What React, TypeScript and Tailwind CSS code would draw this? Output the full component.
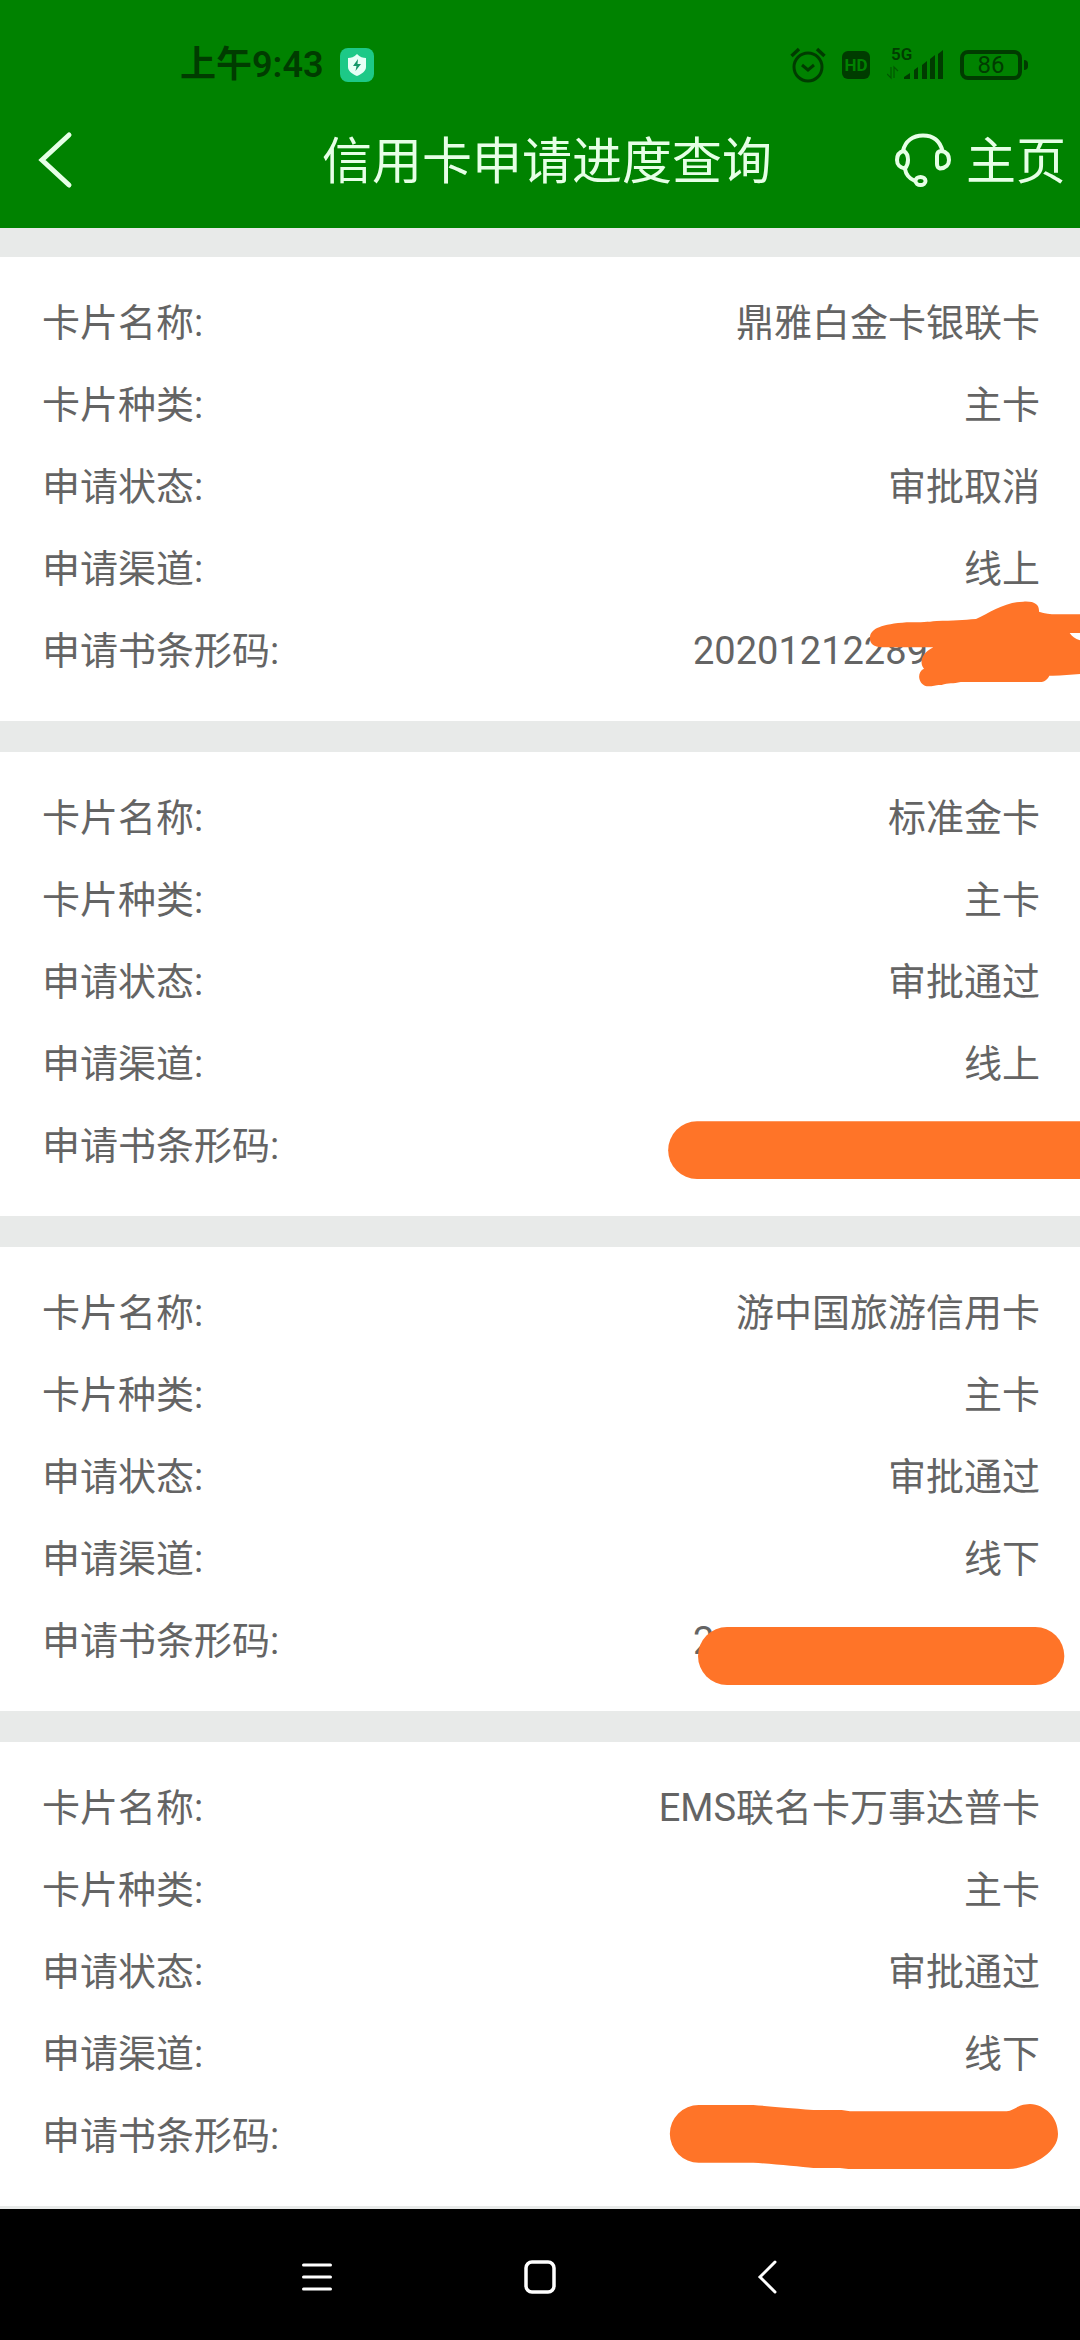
import React from 'react';

interface Application {
  name: string;
  kind: string;
  status: string;
  channel: string;
  barcode: string;
  mask: React.ReactNode;
}

// Marker strokes that hide the barcode, drawn on a 3x grid
const applications: Application[] = [
  {
    name: '鼎雅白金卡银联卡',
    kind: '主卡',
    status: '审批取消',
    channel: '线上',
    barcode: '20201212289',
    mask: (
      <svg className="absolute right-0 bottom-0 w-[440px] h-[141px]" viewBox="0 0 1320 423" fill="#ff7428" aria-hidden="true">
        <path d="M690 172C692 145 725 133 800 127C850 127 860 126 890 123C940 122 970 120 1008 117C1050 98 1095 66 1150 65C1185 63 1198 74 1197 95C1215 101 1230 103 1250 103H1320V159H1289C1295 168 1305 176 1320 181V282C1290 284 1260 288 1228 287C1222 299 1212 306 1200 306H962C940 312 925 308 905 315C885 314 880 320 860 319C833 312 830 275 852 266C839 252 840 222 880 202H725C700 201 688 190 690 172Z" />
      </svg>
    ),
  },
  {
    name: '标准金卡',
    kind: '主卡',
    status: '审批通过',
    channel: '线上',
    barcode: '',
    mask: (
      <svg className="absolute right-0 bottom-0 w-[440px] h-[126px]" viewBox="0 0 1320 378" fill="#ff7428" aria-hidden="true">
        <path d="M171 94H1320V267H171A86 86 0 0 1 171 94Z" />
      </svg>
    ),
  },
  {
    name: '游中国旅游信用卡',
    kind: '主卡',
    status: '审批通过',
    channel: '线下',
    barcode: '2',
    mask: (
      <svg className="absolute right-0 bottom-0 w-[440px] h-[111px]" viewBox="0 0 1320 333" fill="#ff7428" aria-hidden="true">
        <rect x="174" y="81" width="1099" height="174" rx="87" />
      </svg>
    ),
  },
  {
    name: 'EMS联名卡万事达普卡',
    kind: '主卡',
    status: '审批通过',
    channel: '线下',
    barcode: '',
    mask: (
      <svg className="absolute right-0 bottom-0 w-[440px] h-[126px]" viewBox="0 0 1320 378" fill="#ff7428" aria-hidden="true">
        <path d="M176 75H340C380 78 440 84 520 90H605L630 94H1100C1125 92 1130 73 1170 72C1215 74 1254 112 1254 162C1254 222 1165 266 1105 267H625L600 264H520C480 260 400 252 340 248H176A86 86 0 0 1 176 75Z" />
      </svg>
    ),
  },
];

const StatusBar: React.FC = () => (
  <div className="h-[92px] pt-[38px] pl-[180px] pr-[52px] flex items-center justify-between text-[#003c00]">
    <div className="flex items-center gap-4">
      <span className="text-[36px] leading-10 font-semibold">上午9:43</span>
      <svg className="w-[34px] h-[34px]" viewBox="0 0 34 34" aria-hidden="true">
        <rect width="34" height="34" rx="8" fill="#1dc987" />
        <path d="M17 6C20 9 23 10 26 10V19C26 23 22 26 17 28C12 26 8 23 8 19V10C11 10 14 9 17 6Z" fill="#e6fff6" />
        <path d="M18 11L13 18H16.500L15.500 23L21 16H17.500Z" fill="#15976a" />
      </svg>
    </div>
    <div className="flex items-center">
      <svg className="w-9 h-9 mr-4" viewBox="0 0 36 36" fill="none" stroke="currentColor" strokeWidth="3" aria-hidden="true">
        <circle cx="18" cy="20" r="14" />
        <path d="M12 18L18 23L24 18" />
        <path d="M1.500 9L9 2M34.500 9L27 2" strokeWidth="3.500" />
      </svg>
      <span className="w-7 h-7 mr-[17px] rounded-md bg-[#003c00] text-[#008200] text-[17px] leading-7 font-bold text-center">HD</span>
      <div className="relative w-[57px] h-[34px] mr-4">
        <span className="absolute left-[4px] top-[-2px] text-[17px] leading-4 font-semibold">5G</span>
        <svg className="w-full h-full" viewBox="0 0 57 34" fill="currentColor" aria-hidden="true">
          <path d="M4 19V30L0 26M7 30V19L11 23" fill="none" stroke="currentColor" strokeWidth="1.200" opacity="0.6" />
          <path d="M17 31V29L23 25V31ZM27 31V22L31 19V31ZM35 31V17L40 13V31ZM43 31V11L48 7V31ZM51 31V6L56 2V31Z" />
        </svg>
      </div>
      <span className="w-[62px] h-[30px] rounded-lg border-4 border-[#003c00] text-2xl leading-[22px] text-center">86</span>
      <span className="w-1 h-2.5 ml-0.5 rounded-r-full bg-[#003c00]" />
    </div>
  </div>
);

const TitleBar: React.FC = () => (
  <div className="h-[136px] pl-7 pr-[14px] grid grid-cols-[1fr_auto_1fr] items-center text-[#e6ffe6]">
    <button type="button" aria-label="返回" className="justify-self-start w-12 h-16">
      <svg viewBox="0 0 48 64" fill="none" stroke="currentColor" strokeWidth="5" strokeLinecap="round" aria-hidden="true">
        <path d="M41 7L14 32L41 57" />
      </svg>
    </button>
    <h1 className="pt-1 text-[50px] leading-[64px]">信用卡申请进度查询</h1>
    <div className="justify-self-end flex items-center gap-[15px]">
      <button type="button" aria-label="客服">
        <svg className="w-14 h-[54px]" viewBox="0 0 56 54" fill="none" stroke="currentColor" strokeWidth="4" strokeLinejoin="round" aria-hidden="true">
          <path d="M8 18C10 8 18 2.500 28 2.500S45 8 47.500 18" />
          <path d="M9 18C4 19 2 22.500 2 27S5 35 10 35.500C12 33 13 31 13 27S12 20 9 18Z" />
          <path d="M46.500 18C52 19 54 22.500 54 27S51 35 45 35.500C43 35 42 34 42 31V23C42 20 43 18 46.500 18Z" />
          <path d="M10 36C11 42 15 46 20 48" />
          <ellipse cx="25.500" cy="48" rx="5" ry="4" />
        </svg>
      </button>
      <a href="#home" className="pt-1 text-[50px] leading-[64px]">主页</a>
    </div>
  </div>
);

const Row: React.FC<{ label: string; children: React.ReactNode }> = ({ label, children }) => (
  <div className="flex justify-between">
    <dt>{label}:</dt>
    <dd>{children}</dd>
  </div>
);

const ApplicationCard: React.FC<{ item: Application }> = ({ item }) => (
  <section className="relative bg-white pt-[25px] pb-[29px] pl-[42px] pr-10">
    <dl className="text-[38px] leading-[82px] text-[#646464]">
      <Row label="卡片名称">{item.name}</Row>
      <Row label="卡片种类">{item.kind}</Row>
      <Row label="申请状态">{item.status}</Row>
      <Row label="申请渠道">{item.channel}</Row>
      <Row label="申请书条形码">
        <span className="block w-[347px]">{item.barcode}</span>
      </Row>
    </dl>
    {item.mask}
  </section>
);

const SystemNav: React.FC = () => (
  <nav className="h-[131px] px-[28%] pt-1 bg-black text-white flex items-center justify-between">
    <button type="button" aria-label="最近任务" className="w-8 h-9">
      <svg viewBox="0 0 32 36" stroke="currentColor" strokeWidth="3" strokeLinecap="round" aria-hidden="true">
        <path d="M1.500 6H28.500M1.500 18H28.500M1.500 30H28.500" />
      </svg>
    </button>
    <button type="button" aria-label="主屏幕" className="w-8 h-9">
      <svg viewBox="0 0 32 36" fill="none" stroke="currentColor" strokeWidth="3.500" aria-hidden="true">
        <rect x="2" y="3" width="28" height="30" rx="6" />
      </svg>
    </button>
    <button type="button" aria-label="后退" className="w-8 h-9">
      <svg viewBox="0 0 32 36" fill="none" stroke="currentColor" strokeWidth="3" strokeLinecap="round" aria-hidden="true">
        <path d="M29 3L14 18L29 33" />
      </svg>
    </button>
  </nav>
);

const App: React.FC = () => {
  return (
    <div className="min-h-screen flex flex-col bg-[#e8eae9] font-['Roboto','Noto_Sans_CJK_SC',sans-serif]" lang="zh-CN">
      <header className="bg-[#008200]">
        <StatusBar />
        <TitleBar />
      </header>
      <main className="flex-1 pt-[29px] pb-[3px] flex flex-col gap-[31px]">
        {applications.map(item => (
          <ApplicationCard key={item.name} item={item} />
        ))}
      </main>
      <SystemNav />
    </div>
  );
};

export default App;
